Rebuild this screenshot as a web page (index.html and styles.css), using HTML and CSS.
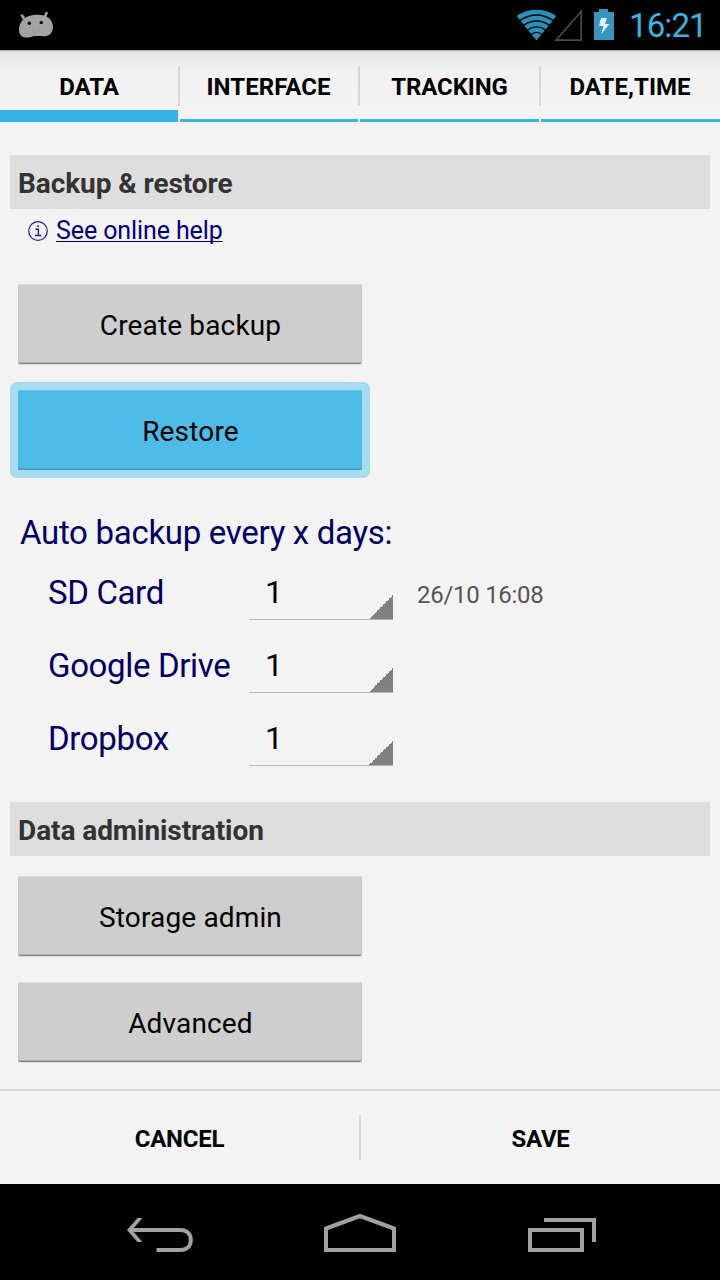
FILE: index.html
```html
<!DOCTYPE html>
<html lang="en">
<head>
<meta charset="utf-8">
<title>Settings</title>
<link rel="stylesheet" href="styles.css">
</head>
<body>
<div class="screen">
  <header class="status">
    <svg class="status-bean" width="36" height="30" viewBox="18 10 36 30">
      <path d="M22 15.500l3 5M46.500 13l-2.500 6" stroke="#a3a3a3" stroke-width="2.600" stroke-linecap="round"/>
      <path d="M19 30C19 22 24 16.500 32 15.200C38 14.400 44 14.800 48 17.500C52 20 53.500 25 52.800 29C52 34 48 36.500 44 36.300C40 36 37 35.800 33.500 36.300C30 37.500 26 38.200 23 37C20 35.500 19 33 19 30Z" fill="#a3a3a3"/>
      <circle cx="29.300" cy="23.300" r="1.700"/><circle cx="41.300" cy="22.600" r="1.700"/>
      <path d="M33.500 28v4M38.500 28v3.500" stroke="#8a8a8a" stroke-width=".8" stroke-dasharray="1 1.500"/>
    </svg>
    <div class="status-right">
      <svg width="98" height="34" viewBox="516 8 98 34">
        <path d="M536.500 40.500L517 16.500Q517 15.500 518 15C529 8 544 8 555 15Q556 15.500 556 16.500Z" fill="#2a8fb9"/>
        <path d="M519.500 20.700Q536.500 9.300 553.500 20.700M523.200 25.500Q536.500 16.500 549.800 25.500M527 30.200Q536.500 23.500 546 30.200M530.500 34.800Q536.500 30 542.500 34.800" fill="none" stroke="#000" stroke-width="1.400"/>
        <path d="M556 40.200L581.200 11.500V40.200Z" fill="none" stroke="#4c4c4c" stroke-width="1.700"/>
        <path d="M594 12h5V9h9v3h6v28h-20Z" fill="#3795bd"/>
        <path d="M601 18h6l-2 6h4.500L601.500 34l1.800-8H599Z" fill="#e3f0f6"/>
      </svg>
      <span class="clock">16:21</span>
    </div>
  </header>

  <nav class="tabs">
    <div class="tab tab-active"><span>DATA</span></div>
    <i class="tab-divider"></i>
    <div class="tab tab-wide"><span>INTERFACE</span></div>
    <i class="tab-divider"></i>
    <div class="tab"><span>TRACKING</span></div>
    <i class="tab-divider"></i>
    <div class="tab tab-wide"><span>DATE,TIME</span></div>
  </nav>

  <main class="content">
    <h2 class="section">Backup &amp; restore</h2>
    <a class="help">
      <svg width="20" height="20" viewBox="0 0 20 20" fill="none" stroke="#1c1c98">
        <circle cx="10" cy="10" r="9.300" stroke-width="1.200"/>
        <path d="M7.500 8.300h2.900v6M7 14.500h6.300" stroke-width="1.400"/>
        <path d="M9.200 5.200h1.700" stroke-width="1.800"/>
      </svg>
      <span class="help-text">See online help</span>
    </a>
    <div class="buttons buttons-backup">
      <button class="button">Create backup</button>
      <button class="button button-focused">Restore</button>
    </div>

    <p class="auto-title">Auto backup every x days:</p>
    <div class="auto-rows">
      <div class="auto-row"><span class="auto-name">SD Card</span><div class="spinner">1</div><span class="auto-date">26/10 16:08</span></div>
      <div class="auto-row"><span class="auto-name">Google Drive</span><div class="spinner">1</div></div>
      <div class="auto-row"><span class="auto-name">Dropbox</span><div class="spinner">1</div></div>
    </div>

    <h2 class="section">Data administration</h2>
    <div class="buttons">
      <button class="button">Storage admin</button>
      <button class="button">Advanced</button>
    </div>
  </main>

  <footer class="actions">
    <span class="action">CANCEL</span>
    <i class="action-divider"></i>
    <span class="action">SAVE</span>
  </footer>

  <div class="navbar">
    <svg width="720" height="96" viewBox="0 1184 720 96" fill="none" stroke="#a1a1a1" stroke-width="4">
      <path d="M129 1230H180C187 1230 190.800 1234 190.800 1240C190.800 1246 187 1250 180 1250H156.500"/>
      <path d="M127 1230L137.500 1218H142.500L132 1230L142.500 1242H137.500Z" fill="#a1a1a1" stroke="none"/>
      <path d="M326 1228.500L360 1216L394 1228.500V1250H326Z"/>
      <path d="M530 1230H582V1250H530ZM544 1220H594V1242"/>
    </svg>
  </div>
</div>
</body>
</html>
```
FILE: styles.css
```css
* { box-sizing: border-box; }
body { margin: 0; background: #f3f3f3; font-family: Roboto, sans-serif; color: #000; }
.screen { width: 720px; height: 1280px; display: flex; flex-direction: column; overflow: hidden; }

.status { height: 50px; flex: none; background: #000; display: flex; justify-content: space-between; padding: 0 14px 0 18px; }
.status-bean { margin-top: 10px; }
.status-right { display: flex; gap: 15px; }
.status-right svg { margin-top: 8px; }
.clock { width: 77px; font-size: 33px; line-height: 52px; color: #33b5e5; letter-spacing: -.9px; white-space: nowrap; }

.tabs { height: 72px; flex: none; display: grid; grid-template: 72px / 178px 2px 178px 2px 179px 2px 179px; background: linear-gradient(#b2b2b2 0, #b2b2b2 1px, #dedede 1px, #e8e8e8 5px, #f2f2f2 20px, #f3f3f3 100%); }
.tab { height: 72px; display: flex; justify-content: center; border-bottom: 3px solid #33b5e5; font-size: 24px; font-weight: 700; line-height: 74px; letter-spacing: -.1px; }
.tab-active { border-bottom-width: 12px; }
.tab-wide { padding-right: 1px; letter-spacing: .05px; }
.tab-divider { height: 40px; margin-top: 16px; background: #d8d8d8; }

.content { flex: none; height: 967px; padding: 33px 10px 0; }
.section { margin: 0; height: 54px; padding-left: 8px; background: #dedede; color: #333; font-size: 28px; line-height: 57px; font-weight: 700; letter-spacing: -.07px; }
.help { display: flex; gap: 8px; height: 44px; padding: 0 18px; color: #00008b; font-size: 25px; line-height: 44px; letter-spacing: -.1px; }
.help svg { margin-top: 12px; }
.help-text { text-decoration: underline; text-decoration-thickness: 1px; text-underline-offset: 2px; text-decoration-skip-ink: none; }

.buttons { display: flex; flex-direction: column; gap: 26px; padding: 20px 8px 0; }
.buttons-backup { padding-top: 31px; }
.button { width: 344px; height: 80px; padding: 3px 0 0 1px; border: 0; border-radius: 2px; background: #cecece; color: #000; font: 28px/75px Roboto, sans-serif; letter-spacing: .15px; box-shadow: inset 0 1px #dadada, inset 1px 0 #c5c5c5, inset -1px 0 #c5c5c5, inset 0 -1px #858585, inset 0 -2px #aaa, 0 1px #dddddd; }
.button-focused { background: #4cbbe7; box-shadow: inset 0 1px #68c5ea, inset 0 -1px #3a98bd, inset 0 -2px #43a9d1, 0 0 0 8px #a7dbef; }

.auto-title { margin: 40px 0 0 10px; font-size: 33px; line-height: 46px; letter-spacing: -.3px; color: #000066; }
.auto-rows { display: grid; gap: 21px; margin: 12px 0 36px 38px; }
.auto-row { height: 52px; display: grid; grid-template: 52px / 201px 144px 1fr; }
.auto-name { font-size: 33px; line-height: 49px; letter-spacing: -.35px; color: #000066; white-space: nowrap; }
.spinner { padding-left: 16px; font-size: 32px; line-height: 49px; border-bottom: 1px solid #b5b5b5; background: linear-gradient(to bottom right, transparent 50%, #808080 50%) right bottom / 24px 24px no-repeat; }
.auto-date { padding-left: 24px; font-size: 24px; line-height: 55px; letter-spacing: -.28px; color: #555; }

.actions { flex: none; height: 95px; display: flex; border-top: 2px solid #d8d8d8; }
.action { flex: 1; text-align: center; font-size: 24px; font-weight: 700; line-height: 96px; letter-spacing: -.25px; }
.action-divider { width: 2px; height: 45px; margin-top: 24px; background: #d8d8d8; }
.navbar { flex: none; height: 96px; background: #000; }
.navbar svg { display: block; }
```
